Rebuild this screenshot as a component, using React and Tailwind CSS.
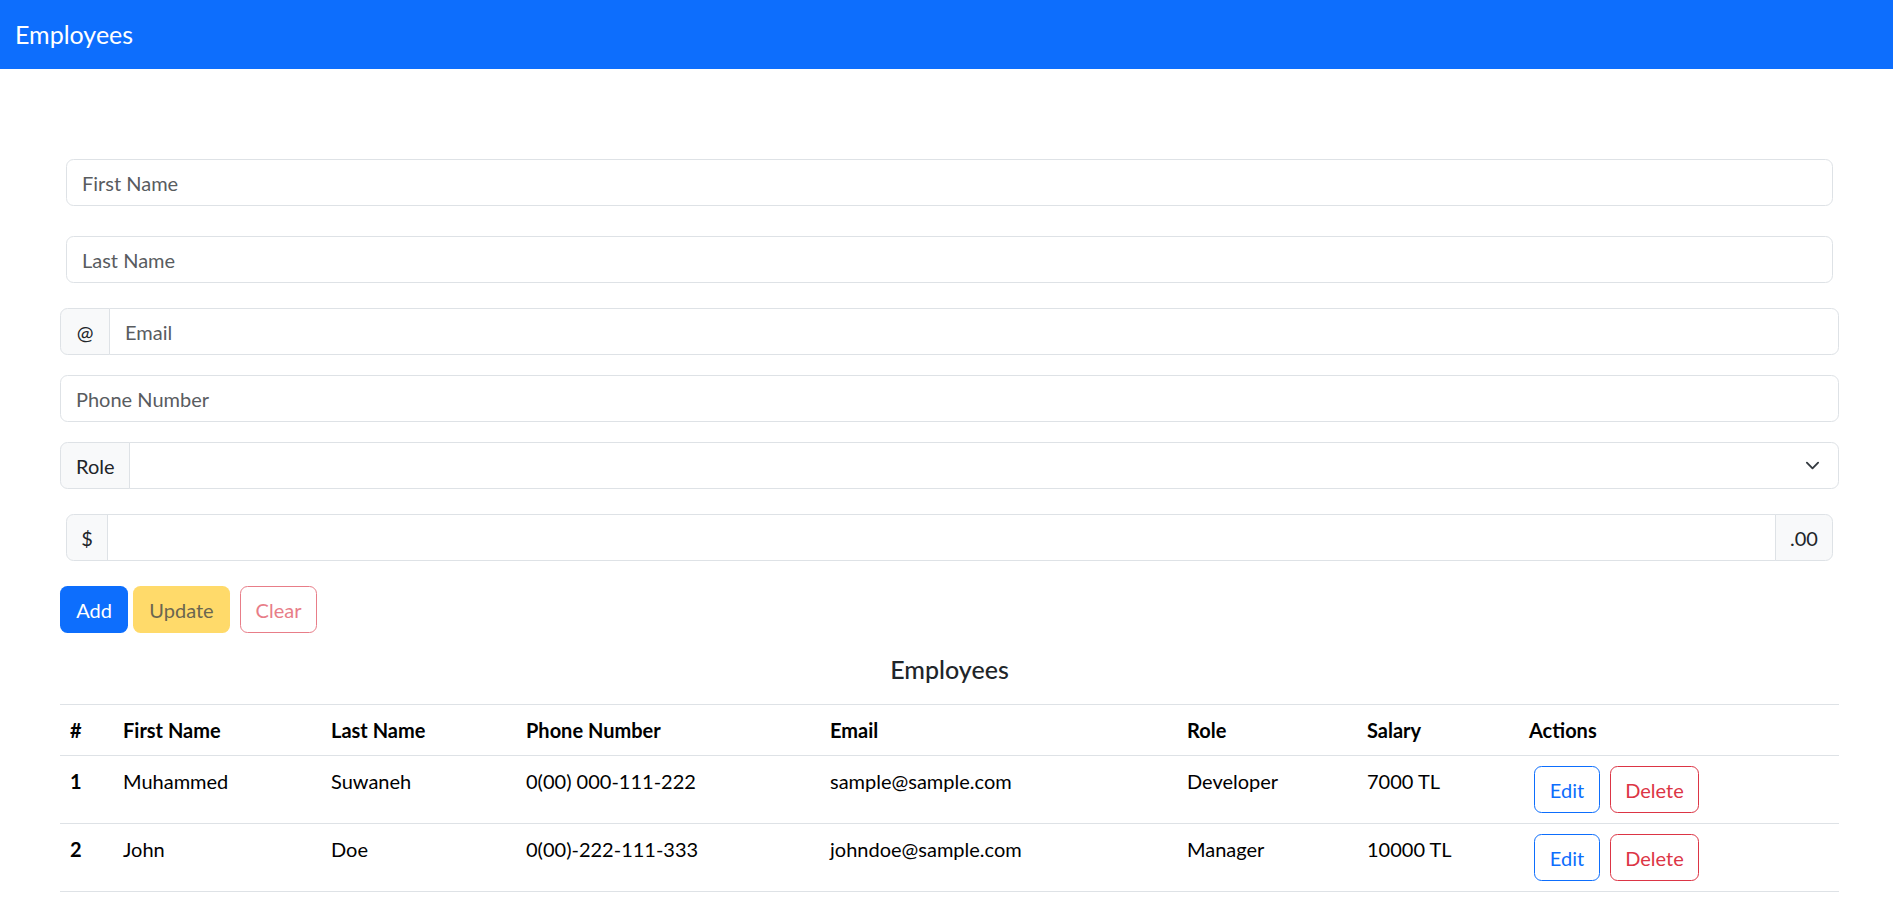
import { useState } from "react";

const employees = [
  {
    id: 1,
    firstName: "Muhammed",
    lastName: "Suwaneh",
    phone: "0(00) 000-111-222",
    email: "sample@sample.com",
    role: "Developer",
    salary: "7000 TL",
  },
  {
    id: 2,
    firstName: "John",
    lastName: "Doe",
    phone: "0(00)-222-111-333",
    email: "johndoe@sample.com",
    role: "Manager",
    salary: "10000 TL",
  },
];

const inputClass =
  "w-full h-[47px] px-[15px] text-[20px] text-[#212529] bg-white border border-[#dee2e6] rounded-[7.5px] outline-none placeholder:text-[#595c5f]";

export default function App() {
  const [form, setForm] = useState({
    firstName: "",
    lastName: "",
    email: "",
    phone: "",
    role: "",
    salary: "",
  });

  const set = (key) => (e) => setForm({ ...form, [key]: e.target.value });

  return (
    <div className="min-h-screen bg-white text-[#212529] font-['Segoe_UI','Lato',sans-serif] text-[20px] leading-[1.5]">
      {/* Navbar */}
      <nav className="h-[69px] bg-[#0d6efd] flex items-center px-[15px]">
        <span className="text-white text-[25px] leading-none">Employees</span>
      </nav>

      <div className="ml-[60px] w-[1779px]">
        {/* Form */}
        <div className="flex flex-col pt-[90px]">
          <div className="mx-[6px]">
            <input
              className={inputClass}
              placeholder="First Name"
              value={form.firstName}
              onChange={set("firstName")}
            />
          </div>

          <div className="mx-[6px] mt-[30px]">
            <input
              className={inputClass}
              placeholder="Last Name"
              value={form.lastName}
              onChange={set("lastName")}
            />
          </div>

          {/* Email */}
          <div className="mt-[25px] flex h-[47px]">
            <span className="flex items-center w-[50px] justify-center bg-[#f8f9fa] border border-[#dee2e6] rounded-l-[7.5px]">
              @
            </span>
            <input
              className="flex-1 -ml-px px-[15px] text-[20px] bg-white border border-[#dee2e6] rounded-r-[7.5px] outline-none placeholder:text-[#595c5f]"
              placeholder="Email"
              value={form.email}
              onChange={set("email")}
            />
          </div>

          <div className="mt-[20px]">
            <input
              className={inputClass}
              placeholder="Phone Number"
              value={form.phone}
              onChange={set("phone")}
            />
          </div>

          {/* Role */}
          <div className="mt-[20px] flex h-[47px]">
            <span className="flex items-center px-[15px] w-[70px] bg-[#f8f9fa] border border-[#dee2e6] rounded-l-[7.5px]">
              Role
            </span>
            <div className="flex-1 -ml-px flex items-center justify-end bg-white border border-[#dee2e6] rounded-r-[7.5px]">
              <svg
                width="15"
                height="15"
                viewBox="0 0 16 16"
                className="mr-[18px]"
                fill="none"
                stroke="#343a40"
                strokeWidth="2"
                strokeLinecap="round"
                strokeLinejoin="round"
              >
                <path d="m2 5 6 6 6-6" />
              </svg>
            </div>
          </div>

          {/* Salary */}
          <div className="mx-[6px] mt-[25px] flex h-[47px]">
            <span className="flex items-center justify-center w-[42px] bg-[#f8f9fa] border border-[#dee2e6] rounded-l-[7.5px]">
              $
            </span>
            <input
              className="flex-1 -ml-px px-[15px] text-[20px] bg-white border border-[#dee2e6] outline-none"
              value={form.salary}
              onChange={set("salary")}
            />
            <span className="flex items-center justify-center w-[58px] -ml-px bg-[#f8f9fa] border border-[#dee2e6] rounded-r-[7.5px]">
              .00
            </span>
          </div>

          {/* Buttons */}
          <div className="mt-[25px] flex items-center">
            <button className="h-[47px] w-[68px] rounded-[7.5px] bg-[#0d6efd] text-white">
              Add
            </button>
            <button
              disabled
              className="ml-[5px] h-[47px] w-[97px] rounded-[7.5px] bg-[#ffda6a] text-[#6b6650]"
            >
              Update
            </button>
            <button
              disabled
              className="ml-[10px] h-[47px] w-[77px] rounded-[7.5px] border border-[#e87d88] text-[#e87d88] bg-white"
            >
              Clear
            </button>
          </div>
        </div>

        {/* Table */}
        <h5 className="mt-[21px] mb-[20px] text-center text-[25px] font-medium leading-[1.2]">
          Employees
        </h5>

        <table className="w-full table-fixed border-collapse text-black">
          <colgroup>
            <col className="w-[53px]" />
            <col className="w-[208px]" />
            <col className="w-[195px]" />
            <col className="w-[304px]" />
            <col className="w-[357px]" />
            <col className="w-[180px]" />
            <col className="w-[162px]" />
            <col />
          </colgroup>
          <thead>
            <tr className="border-t border-[#dee2e6]">
              {["#", "First Name", "Last Name", "Phone Number", "Email", "Role", "Salary", "Actions"].map(
                (h) => (
                  <th
                    key={h}
                    className="p-[10px] text-left font-bold border-b border-[#dee2e6] align-top"
                  >
                    {h}
                  </th>
                )
              )}
            </tr>
          </thead>
          <tbody>
            {employees.map((emp) => (
              <tr key={emp.id}>
                <td className="p-[10px] font-bold border-b border-[#dee2e6] align-top">{emp.id}</td>
                <td className="p-[10px] border-b border-[#dee2e6] align-top">{emp.firstName}</td>
                <td className="p-[10px] border-b border-[#dee2e6] align-top">{emp.lastName}</td>
                <td className="p-[10px] border-b border-[#dee2e6] align-top">{emp.phone}</td>
                <td className="p-[10px] border-b border-[#dee2e6] align-top">{emp.email}</td>
                <td className="p-[10px] border-b border-[#dee2e6] align-top">{emp.role}</td>
                <td className="p-[10px] border-b border-[#dee2e6] align-top">{emp.salary}</td>
                <td className="p-[10px] border-b border-[#dee2e6] align-top">
                  <div className="flex">
                    <button className="mx-[5px] h-[47px] w-[66px] rounded-[7.5px] border border-[#0d6efd] text-[#0d6efd] bg-white">
                      Edit
                    </button>
                    <button className="mx-[5px] h-[47px] w-[89px] rounded-[7.5px] border border-[#dc3545] text-[#dc3545] bg-white">
                      Delete
                    </button>
                  </div>
                </td>
              </tr>
            ))}
          </tbody>
        </table>
      </div>
    </div>
  );
}
